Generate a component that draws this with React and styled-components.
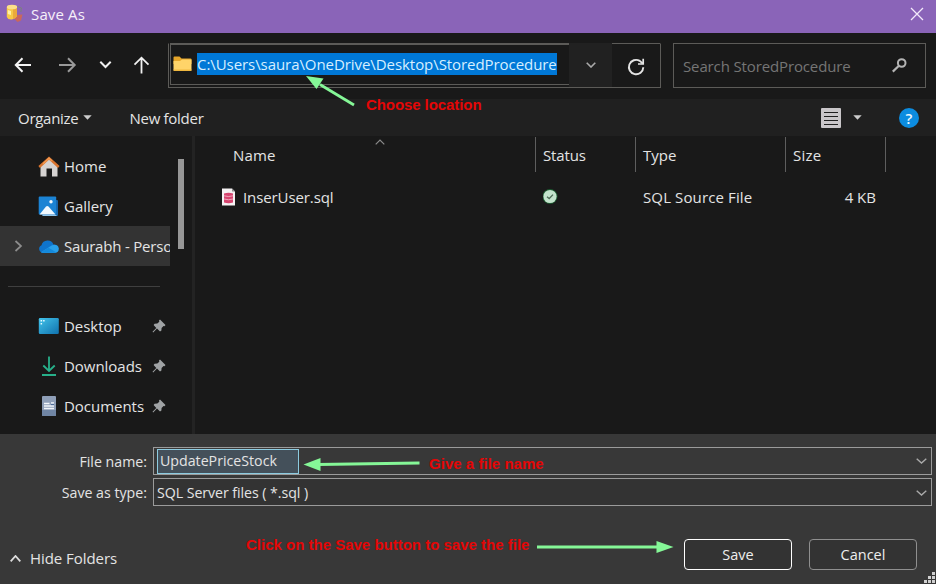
import React from 'react';
import styled, { createGlobalStyle } from 'styled-components';

const GlobalStyle = createGlobalStyle`
	* {
		box-sizing: border-box;
	}

	body {
		margin: 0;
		background-color: #191919;
	}

	svg {
		display: block;
		flex: none;
	}
`;

const Dialog = styled.div`
	position: relative;
	display: flex;
	flex-direction: column;
	width: 936px;
	height: 584px;
	overflow: hidden;
	background-color: #191919;
	color: #e4e4e4;
	font-family: 'Open Sans', 'Noto Sans', sans-serif;
	font-size: 15px;
	line-height: 20px;
	white-space: nowrap;
`;

const TitleBar = styled.header`
	display: flex;
	align-items: center;
	height: 33px;
	padding: 0 12px 5px 6px;
	background-color: #8a64b8;
	color: #f6f0fa;
`;

const Title = styled.span`
	flex: 1;
	margin-left: 6px;
	letter-spacing: 0.15px;
`;

const NavBar = styled.nav`
	display: flex;
	align-items: flex-start;
	height: 66px;
	padding: 10px 10px 0 12px;
	background-color: #191919;
`;

const NavButtons = styled.div`
	display: grid;
	grid-template-columns: 44px 39px 33px 40px;
	align-items: center;
	height: 45px;
	padding-bottom: 1px;
`;

const AddressBar = styled.div`
	display: flex;
	width: 493px;
	height: 45px;
	border: 1px solid #5c5b58;
	border-top-color: transparent;
`;

const AddressField = styled.div`
	display: flex;
	align-items: center;
	width: 399px;
	height: 42px;
	margin: -1px 0 0 1px;
	padding: 0 0 1px 2px;
	border: solid #5c5b58;
	border-width: 2px 0 1px 1px;
`;

const Selected = styled.span`
	width: 360px;
	height: 22px;
	margin-left: 5px;
	background-color: #0078d7;
	color: #d6efff;
	line-height: 23px;
	letter-spacing: -0.065px;
`;

const AddressDrop = styled.div`
	display: flex;
	align-items: center;
	justify-content: center;
	width: 43px;
	margin-top: -1px;
	background-color: #212121;
`;

const Refresh = styled.div`
	display: flex;
	flex: 1;
	align-items: center;
	justify-content: center;
	margin-top: -1px;
	padding: 3px 1px 0 0;
	border-top: 1px solid #5c5b58;
`;

const SearchBox = styled.div`
	display: flex;
	align-items: center;
	justify-content: space-between;
	width: 253px;
	height: 45px;
	margin-left: 12px;
	padding: 0 18px 0 9px;
	border: 1px solid #5c5b58;
	color: #757575;
	letter-spacing: -0.13px;
`;

const Toolbar = styled.div`
	display: flex;
	align-items: center;
	height: 37px;
	padding: 0 17px 0 18px;
	background-color: #202020;
`;

const ToolButton = styled.div`
	display: flex;
	align-items: center;
	gap: ${({ $gap }) => $gap || 5}px;
	margin-right: ${({ $after }) => $after || 0}px;
	letter-spacing: -0.28px;
`;

const Help = styled.div`
	display: flex;
	align-items: center;
	justify-content: center;
	width: 20px;
	height: 20px;
	border-radius: 50%;
	background-color: #0c8ce0;
	color: #eaf7ff;
	font-weight: 600;
`;

const Spacer = styled.div`
	flex: 1;
`;

const Body = styled.main`
	display: flex;
	height: 298px;
`;

const Sidebar = styled.aside`
	display: flex;
	width: 195px;
	border-right: 3px solid #232323;
`;

const Places = styled.div`
	width: 170px;
	padding-top: 10px;
	overflow: hidden;
`;

const Place = styled.div`
	display: grid;
	grid-template-columns: 28px 23px 91px 14px;
	align-items: center;
	height: 40px;
	padding-left: 10px;
	background-color: ${({ $active }) => ($active ? '#333' : 'transparent')};
	letter-spacing: ${({ $active }) => ($active ? '-0.2px' : '-0.03px')};
`;

const PlaceName = styled.span`
	padding-left: 3px;
`;

const Divider = styled.hr`
	width: 152px;
	height: 1px;
	margin: 20px 0 19px 8px;
	border: 0;
	background-color: #3f3f3f;
`;

const ScrollThumb = styled.div`
	width: 6px;
	height: 90px;
	margin: 23px 0 0 8px;
	background-color: #979797;
`;

const Files = styled.section`
	flex: 1;
`;

const columns = '341px 100px 150px 100px';

const HeadRow = styled.div`
	display: grid;
	grid-template-columns: ${columns};
	height: 36px;
`;

const HeadCell = styled.div`
	display: flex;
	justify-content: space-between;
	margin-top: 1px;
	padding: 8px 0 0 ${({ $left }) => $left || 7}px;
	border-right: 1px solid #5e5e5e;
	letter-spacing: ${({ $space }) => $space || 0}px;
`;

const SortMark = styled.div`
	width: 160px;
	margin-top: -6px;
`;

const FileRow = styled.div`
	display: grid;
	grid-template-columns: ${columns};
	align-items: center;
	height: 50px;
`;

const FileCell = styled.div`
	display: flex;
	align-items: center;
	justify-content: ${({ $end }) => ($end ? 'flex-end' : 'flex-start')};
	gap: 7px;
	padding: 0 ${({ $end }) => ($end ? 10 : 0)}px 0 ${({ $left }) => $left || 7}px;
	letter-spacing: ${({ $space }) => $space || 0}px;
`;

const Footer = styled.footer`
	display: flex;
	flex-direction: column;
	flex: 1;
	padding: 13px 4px 0 10px;
	background-color: #383838;
`;

const FormRow = styled.div`
	display: grid;
	grid-template-columns: 137px 779px;
	column-gap: 6px;
	align-items: center;
	height: 28px;
	margin-bottom: 3px;
	font-size: 14.2px;
`;

const FormLabel = styled.label`
	padding-top: 1px;
	text-align: right;
`;

const Field = styled.div`
	display: flex;
	align-items: center;
	justify-content: space-between;
	height: 28px;
	padding: ${({ $dark }) => ($dark ? 1 : 0)}px 4px 0 3px;
	border: 1px solid #9b9b9b;
	background-color: ${({ $dark }) => ($dark ? '#333' : '#383838')};
	letter-spacing: ${({ $dark }) => ($dark ? '-0.06px' : '0')};
`;

const NameEdit = styled.div`
	width: 142px;
	height: 25px;
	padding-left: 2px;
	border: 1px solid #8ccbe0;
	background-color: #44505a;
	line-height: 22px;
`;

const Actions = styled.div`
	display: flex;
	align-items: center;
	height: 31px;
	margin-top: 30px;
	padding-right: 15px;
`;

const HideFolders = styled.div`
	display: flex;
	align-items: center;
	flex: 1;
	gap: 9px;
	padding-top: 7px;
	letter-spacing: -0.05px;
`;

const Button = styled.button`
	width: 108px;
	height: 31px;
	margin-left: 17px;
	padding: 1px 0 0;
	border: 1px solid ${({ $primary }) => ($primary ? '#fff' : '#8f8f8f')};
	border-radius: 4px;
	background-color: #333;
	color: #eee;
	font: inherit;
	font-size: 14.5px;
`;

const Overlay = styled.div`
	position: absolute;
	inset: 0;
	pointer-events: none;
`;

const Note = styled.span`
	position: absolute;
	left: ${({ $x }) => $x}px;
	top: ${({ $y }) => $y}px;
	color: #e40606;
	font: bold 15px/18px 'Liberation Sans', Arial, sans-serif;
	letter-spacing: ${({ $space }) => $space || 0}px;
`;

const Arrows = styled.svg`
	position: absolute;
	left: 0;
	top: 0;
`;

const Grip = styled.svg`
	position: absolute;
	right: 0;
	bottom: 0;
`;

const Chevron = ({ w = 10, h = 6, up, color = '#aaa', stroke = 1.4 }) => (
	<svg width={w} height={h} viewBox={`0 0 ${w} ${h}`} fill='none' stroke={color} strokeWidth={stroke}>
		<path d={up ? `M.7 ${h - 0.7}L${w / 2} 1L${w - 0.7} ${h - 0.7}` : `M.7 .7L${w / 2} ${h - 1}L${w - 0.7} .7`} />
	</svg>
);

const Caret = () => (
	<svg width='9' height='5' viewBox='0 0 9 5'>
		<path d='M.3 .3H8.7L4.5 4.7Z' fill='#ccc' />
	</svg>
);

const AppIcon = () => (
	<svg width='19' height='20' viewBox='0 0 19 20'>
		<path d='M10 11L16.500 10.500L15 16.500L11.500 18L8.500 15Z' fill='#c9675c' />
		<path d='M.8 3V13Q2 16 6 15.500Q9.500 15 11 12V3Z' fill='#f7c948' />
		<path d='M7 4H11V12Q9.500 15 7 15.300Z' fill='#eaa93c' />
		<ellipse cx='6' cy='3' rx='5.200' ry='2.300' fill='#fbe08a' />
		<path d='M1.800 6L5 7V11L1.800 10Z' fill='#fff0a8' />
		<path d='M11.500 2.500L15.500 4L14.800 8' stroke='#7a8478' fill='none' />
	</svg>
);

const FolderIcon = () => (
	<svg width='19' height='16' viewBox='0 0 19 16'>
		<path d='M.5 1.500Q.5 .5 1.500 .5H6.500L8.500 2.500H17.500Q18.500 2.500 18.500 3.500V8H.5Z' fill='#e6a62a' />
		<path d='M.5 5H7L9 3.500H18.500V14.200Q18.500 15 17.500 15H1.500Q.5 15 .5 14Z' fill='#ffd469' />
		<path d='M.5 13.500H18.500V14.200Q18.500 15 17.500 15H1.500Q.5 15 .5 14Z' fill='#f0b83f' />
	</svg>
);

const HomeIcon = () => (
	<svg width='22' height='21' viewBox='0 0 22 21'>
		<path d='M2.500 9.500L11 2L19.500 9.500V20.500H14V12.500H8.500V20.500H2.500Z' fill='#d6d3d2' />
		<path d='M1.200 11L11 2.200L20.800 11' fill='none' stroke='#d9742f' strokeWidth='2.400' />
		<path d='M5 7.700L11 2.200L14 5' fill='none' stroke='#f29a52' strokeWidth='1.500' />
	</svg>
);

const GalleryIcon = () => (
	<svg width='21' height='21' viewBox='0 0 21 21'>
		<path d='M4.500 4H19Q20 4 20 5V19Q20 20 19 20H4.500Z' fill='#1763a8' />
		<path d='M4.500 19.500H18.500' stroke='#8ec5ea' />
		<rect x='.7' y='.5' width='17.500' height='18' rx='1' fill='#1b83d4' />
		<path d='M1.500 18.500L8 10.500Q9.300 9.500 10.500 10.500L17.500 18.500Z' fill='#f1f8fe' />
		<circle cx='13' cy='5.800' r='1.700' fill='#f1f8fe' />
	</svg>
);

const CloudIcon = () => (
	<svg width='21' height='13' viewBox='0 0 21 13'>
		<path d='M4.500 12.800A4 4 0 0 1 3.500 5.200A6.300 6.300 0 0 1 15.500 4.500A4.300 4.300 0 0 1 16.800 12.800Z' fill='#0f74cc' />
		<path d='M3 12.300L14 5.300Q20 3.600 20.800 8.500Q20.800 12.800 16.800 12.800H4.500Z' fill='#28a0ea' />
		<path d='M3 12.300L10.500 7.800L18.500 12.500Q17.500 12.800 16.800 12.800H4.500Z' fill='#1489dc' />
	</svg>
);

const DesktopIcon = () => (
	<svg width='21' height='17' viewBox='0 0 21 17'>
		<defs>
			<linearGradient id='desk' x1='0' y1='0' x2='1' y2='1'>
				<stop offset='0' stopColor='#42c3ea' />
				<stop offset='1' stopColor='#1072ae' />
			</linearGradient>
		</defs>
		<rect x='.8' width='20' height='16' rx='1.200' fill='url(#desk)' />
		<path d='M2.600 2.700h1.500m1 0h1.500M2.600 5.700h1.500' stroke='#e9faff' strokeWidth='1.500' />
	</svg>
);

const DownloadIcon = () => (
	<svg width='21' height='20' viewBox='0 0 21 20' fill='none' stroke='#27b08a' strokeWidth='1.800'>
		<path d='M11 .5V15M5.300 9.500L11 15L16.700 9.500' />
		<path d='M4 19H18' strokeWidth='2' />
	</svg>
);

const DocumentIcon = () => (
	<svg width='21' height='20' viewBox='0 0 21 20'>
		<rect x='4' width='14' height='20' rx='1' fill='#8f9fb8' />
		<path d='M4 14H18V19Q18 20 17 20H5Q4 20 4 19Z' fill='#7085a4' />
		<path d='M6 7.500H11.500M6 10H16M6 12.500H16M13 7H16' stroke='#f3f7fc' strokeWidth='1.300' />
		<path d='M13 8.500H16' stroke='#4c6b98' strokeWidth='1.200' />
	</svg>
);

const PinIcon = () => (
	<svg width='14' height='14' viewBox='0 0 14 14'>
		<path d='M8 .5L13.500 6L12.500 7.200L11.500 6.900L9.600 9L9.400 11.500L8 12.500L5 9.600L1.200 13.400L.5 12.800L4.300 8.900L1.600 6L2.600 4.800L5.300 4.600L7.300 2.700L7 1.600Z' fill='#a0a3a5' />
	</svg>
);

const SqlFileIcon = () => (
	<svg width='15' height='19' viewBox='0 0 15 19'>
		<path d='M1 .5H11L14 3.500V17.500H1Z' fill='#f5f2f3' />
		<path d='M11 .5V3.500H14Z' fill='#8e8e8e' />
		<path d='M3 5.500Q7.500 4 12 5.500V14.500Q7.500 16 3 14.500Z' fill='#d6446f' />
		<path d='M3 7.800Q7.500 9.300 12 7.800M3 11Q7.500 12.500 12 11' stroke='#f6bccd' fill='none' strokeWidth='.8' />
	</svg>
);

const SyncedIcon = () => (
	<svg width='16' height='16' viewBox='0 0 16 16'>
		<circle cx='7' cy='7.500' r='7.500' fill='#1c5a30' />
		<circle cx='7' cy='7.500' r='6.600' fill='#c3e3cc' />
		<path d='M4 7.700L6.200 9.500L10 5.600' fill='none' stroke='#4d6b56' strokeWidth='1.300' />
	</svg>
);

const ListIcon = () => (
	<svg width='20' height='20' viewBox='0 0 20 20'>
		<rect width='20' height='20' rx='1' fill='#c9c6c9' />
		<path d='M3 4.500H17M3 8.500H17M3 12.500H17M3 16.500H17' stroke='#1f1f1f' strokeWidth='1.200' />
	</svg>
);

const SearchIcon = () => (
	<svg width='15' height='15' viewBox='0 0 15 15' fill='none' stroke='#b4b4b4'>
		<circle cx='9.700' cy='5' r='3.800' strokeWidth='2' />
		<path d='M6.900 7.800L.8 13.600' strokeWidth='2.200' />
	</svg>
);

const RefreshIcon = () => (
	<svg width='18' height='18' viewBox='0 0 18 18' fill='none' stroke='#e4e4e4' strokeWidth='1.900'>
		<path d='M16.300 9.300A7.200 7.200 0 1 1 12.800 2.900L15.800 5.500' />
		<path d='M16.200 .8V6H11' strokeWidth='1.700' />
	</svg>
);

const ExpandIcon = () => (
	<svg width='14' height='12' viewBox='0 0 14 12' fill='none' stroke='#8d8d8d' strokeWidth='1.700'>
		<path d='M5.500 1L11 6L5.500 11' />
	</svg>
);

const places = [
	{ name: 'Home', icon: <HomeIcon /> },
	{ name: 'Gallery', icon: <GalleryIcon /> },
	{ name: 'Saurabh - Perso', icon: <CloudIcon />, active: true }
];

const pinned = [
	{ name: 'Desktop', icon: <DesktopIcon /> },
	{ name: 'Downloads', icon: <DownloadIcon /> },
	{ name: 'Documents', icon: <DocumentIcon /> }
];

const App = () => {
	return (
		<Dialog>
			<GlobalStyle />
			<TitleBar>
				<AppIcon />
				<Title>Save As</Title>
				<svg width='14' height='14' viewBox='0 0 14 14' stroke='#f3e9fa' strokeWidth='1.300'>
					<path d='M1 1L13 13M13 1L1 13' />
				</svg>
			</TitleBar>

			<NavBar>
				<NavButtons>
					<svg width='22' height='16' viewBox='0 0 22 16' fill='none' stroke='#f4f4f4' strokeWidth='2'>
						<path d='M19 8H4M10.500 1.300L3.800 8L10.500 14.700' />
					</svg>
					<svg width='22' height='16' viewBox='0 0 22 16' fill='none' stroke='#9a9a9a' strokeWidth='2'>
						<path d='M3 8H18.500M12 1.300L18.700 8L12 14.700' />
					</svg>
					<svg width='22' height='16' viewBox='0 0 22 16' fill='none' stroke='#f0f0f0' strokeWidth='2'>
						<path d='M5.300 4.800L10.500 10L15.700 4.800' />
					</svg>
					<svg width='26' height='20' viewBox='0 0 26 20' fill='none' stroke='#f0f0f0' strokeWidth='1.800'>
						<path d='M13.500 18.500V3M6.500 9.700L13.500 2.700L20.500 9.700' />
					</svg>
				</NavButtons>
				<AddressBar>
					<AddressField>
						<FolderIcon />
						<Selected>C:\Users\saura\OneDrive\Desktop\StoredProcedure</Selected>
					</AddressField>
					<AddressDrop>
						<Chevron stroke={1.6} />
					</AddressDrop>
					<Refresh>
						<RefreshIcon />
					</Refresh>
				</AddressBar>
				<SearchBox>
					Search StoredProcedure
					<SearchIcon />
				</SearchBox>
			</NavBar>

			<Toolbar>
				<ToolButton $after={37}>
					Organize
					<Caret />
				</ToolButton>
				<ToolButton>New folder</ToolButton>
				<Spacer />
				<ToolButton $gap={12} $after={37}>
					<ListIcon />
					<Caret />
				</ToolButton>
				<Help>?</Help>
			</Toolbar>

			<Body>
				<Sidebar>
					<Places>
						{places.map(({ name, icon, active }) => (
							<Place key={name} $active={active}>
								<span>{active && <ExpandIcon />}</span>
								{icon}
								<PlaceName>{name}</PlaceName>
							</Place>
						))}
						<Divider />
						{pinned.map(({ name, icon }) => (
							<Place key={name}>
								<span />
								{icon}
								<PlaceName>{name}</PlaceName>
								<PinIcon />
							</Place>
						))}
					</Places>
					<ScrollThumb />
				</Sidebar>
				<Files>
					<HeadRow>
						<HeadCell $left={38} $space={0.2}>
							Name
							<SortMark>
								<Chevron up color='#8c8c8c' stroke={1.2} />
							</SortMark>
						</HeadCell>
						<HeadCell $space={-0.15}>Status</HeadCell>
						<HeadCell>Type</HeadCell>
						<HeadCell $space={0.2}>Size</HeadCell>
					</HeadRow>
					<FileRow>
						<FileCell $left={26} $space={-0.1}>
							<SqlFileIcon />
							InserUser.sql
						</FileCell>
						<FileCell>
							<SyncedIcon />
						</FileCell>
						<FileCell $space={0.12}>SQL Source File</FileCell>
						<FileCell $end>4 KB</FileCell>
					</FileRow>
				</Files>
			</Body>

			<Footer>
				<FormRow>
					<FormLabel>File name:</FormLabel>
					<Field>
						<NameEdit>UpdatePriceStock</NameEdit>
						<Chevron w={11} />
					</Field>
				</FormRow>
				<FormRow>
					<FormLabel>Save as type:</FormLabel>
					<Field $dark>
						SQL Server files ( *.sql )
						<Chevron w={11} />
					</Field>
				</FormRow>
				<Actions>
					<HideFolders>
						<Chevron w={11} h={7} up color='#ddd' stroke={1.8} />
						Hide Folders
					</HideFolders>
					<Button $primary>Save</Button>
					<Button>Cancel</Button>
				</Actions>
			</Footer>

			<Overlay>
				<Note $x={366} $y={96} $space={-0.08}>Choose location</Note>
				<Note $x={429} $y={455} $space={0.03}>Give a file name</Note>
				<Note $x={246} $y={536}>Click on the Save button to save the file</Note>
				<Arrows width='936' height='584' viewBox='0 0 936 584' fill='#85f797' stroke='#85f797'>
					<path d='M354 105L320 84.500' strokeWidth='2.800' />
					<path d='M306 76L323.500 78.500L316.500 89Z' stroke='none' />
					<path d='M419.500 463L318 464.500' strokeWidth='2.800' />
					<path d='M303.500 464.500L320.500 458V471Z' stroke='none' />
					<path d='M537 547H660' strokeWidth='2.800' />
					<path d='M673.500 547L656.500 541V553Z' stroke='none' />
				</Arrows>
				<Grip width='12' height='12' viewBox='0 0 12 12' fill='#d0d0d0'>
					<path d='M8 0h3v3h-3zM4 4h3v3h-3zM8 4h3v3h-3zM0 8h3v3h-3zM4 8h3v3h-3zM8 8h3v3h-3z' />
				</Grip>
			</Overlay>
		</Dialog>
	);
};

export default App;
